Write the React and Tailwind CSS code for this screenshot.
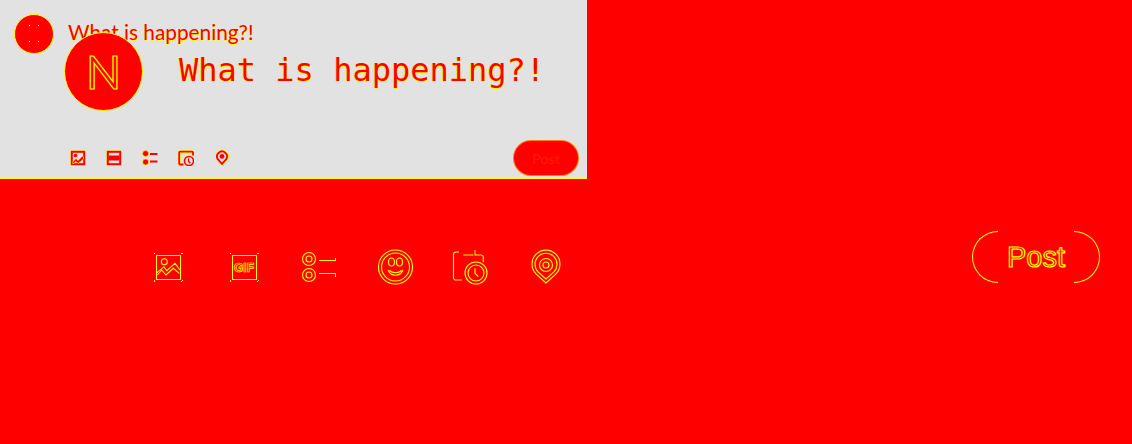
const halo = { stroke: '#ffff00', strokeWidth: 0.6 };

function SmallIcon({ children }) {
  return (
    <svg width="16" height="16" viewBox="0 0 16 16" fill="none" className="shrink-0">
      {children}
    </svg>
  );
}

function TinyImage() {
  return (
    <SmallIcon>
      <rect x="0.5" y="0.5" width="15" height="15" rx="1" fill="#ffff00" />
      <rect x="1.8" y="1.8" width="12.4" height="12.4" fill="#e2e2e2" stroke="#ff0000" strokeWidth="2" />
      <circle cx="5.5" cy="5.5" r="1.8" fill="#ff0000" />
      <path d="M2.5 12 6 8.500l2 2 4.500-4.500 1 1V9L8 13.500l-2-2-3 2.500z" fill="#ff0000" {...halo} />
    </SmallIcon>
  );
}

function TinyGif() {
  return (
    <SmallIcon>
      <rect x="0.5" y="0.5" width="15" height="15" rx="1" fill="#ffff00" />
      <rect x="1.8" y="1.8" width="12.4" height="12.4" fill="#e2e2e2" stroke="#ff0000" strokeWidth="2" />
      <rect x="2.500" y="5.500" width="11" height="5" fill="#ff0000" />
    </SmallIcon>
  );
}

function TinyPoll() {
  return (
    <SmallIcon>
      <circle cx="3.600" cy="3.600" r="3" fill="#ff0000" {...halo} />
      <circle cx="3.600" cy="12" r="3" fill="#ff0000" {...halo} />
      <path d="M8 4h7.500M8 11.500h7.500" stroke="#ff0000" strokeWidth="1.8" />
    </SmallIcon>
  );
}

function TinyCalendar() {
  return (
    <SmallIcon>
      <path d="M5.500 14.500H2.200a1 1 0 0 1-1-1V2.600a1 1 0 0 1 1-1H14a1 1 0 0 1 1 1v3" stroke="#ffff00" strokeWidth="2.800" />
      <path d="M5.500 14.500H2.200a1 1 0 0 1-1-1V2.600a1 1 0 0 1 1-1H14a1 1 0 0 1 1 1v3" stroke="#ff0000" strokeWidth="1.800" />
      <circle cx="11" cy="11" r="4.500" fill="#e2e2e2" stroke="#ffff00" strokeWidth="2.400" />
      <circle cx="11" cy="11" r="4.500" fill="#e2e2e2" stroke="#ff0000" strokeWidth="1.600" />
      <path d="M10.600 8.500v3l1.800 1.800" stroke="#ff0000" strokeWidth="1.400" />
    </SmallIcon>
  );
}

function TinyPin() {
  return (
    <SmallIcon>
      <path d="M8 15.500 2.700 9.800a6.300 6.300 0 1 1 10.600 0z" fill="#e2e2e2" stroke="#ffff00" strokeWidth="1" />
      <path d="M8 13.800 3.800 9.200a5 5 0 1 1 8.400 0z" fill="none" stroke="#ff0000" strokeWidth="1.800" />
      <circle cx="8" cy="6.400" r="2.400" fill="#ff0000" />
    </SmallIcon>
  );
}

function LineIcon({ children }) {
  return (
    <svg width="36" height="36" viewBox="0 0 36 36" fill="none" stroke="#ffff00" strokeWidth="1.100" className="shrink-0 overflow-visible">
      {children}
    </svg>
  );
}

function Ticks() {
  return (
    <path strokeWidth="1" shapeRendering="crispEdges" d="M4 4h1M4 4v1M31 4h1M32 4v1M4 32h1M4 31v1M31 32h1M32 31v1" />
  );
}

export default function App() {
  return (
    <div className="w-[1132px] h-[444px] overflow-hidden bg-[#ff0000] font-['Lato',sans-serif]">
      <div className="w-[587px] h-[179px] bg-[#e2e2e2] border-b border-[#ffff00]">
        <div className="flex items-center gap-[14px] pl-[14px] pt-[14px]">
          <div className="w-10 h-10 rounded-full bg-[#ff0000] border border-[#ffff00] shrink-0 flex items-center justify-center">
            <svg width="12" height="18" viewBox="0 0 12 18" fill="#ffff00">
              <rect x="1" y="0" width="1" height="1" />
              <rect x="10" y="0" width="1" height="1" />
              <rect x="1" y="16" width="1" height="1" />
              <rect x="10" y="16" width="1" height="1" />
            </svg>
          </div>
          <span className="-mt-1 text-[20.8px] leading-none text-[#ff0000] [text-shadow:0.5px_0.5px_0_#ffff00]">What is happening?!</span>
        </div>

        <div className="relative flex items-center -mt-[22px] pl-[64px]">
          <div className="w-[79px] h-[79px] rounded-full bg-[#ff0000] border border-[#ffff00] shrink-0 flex items-center justify-center text-[46px] leading-none text-[#ff0000] [-webkit-text-stroke:1.2px_#ffff00]">
            N
          </div>
          <span className="ml-[36px] -mt-[3px] font-['DejaVu_Sans_Mono',monospace] text-[32px] leading-none text-[#ff0000] [text-shadow:0.5px_0.5px_0_#ffff00,-0.5px_-0.5px_0_#ffff00]">
            What is happening?!
          </span>
        </div>

        <div className="flex items-center justify-between pl-[70px] pr-2 mt-[29px]">
          <div className="flex items-center gap-5">
            <TinyImage />
            <TinyGif />
            <TinyPoll />
            <TinyCalendar />
            <TinyPin />
          </div>
          <button className="w-[66px] h-9 rounded-full bg-[#ff0000] border border-[#ffff00]/50 text-[14px] font-bold text-[#ffff00]/10">
            Post
          </button>
        </div>
      </div>

      <div className="flex items-start justify-between pl-[150px] pr-8 pt-[52px]">
        <div className="flex items-center gap-10 mt-[18px]">
          <LineIcon>
            <Ticks />
            <rect strokeWidth="1" shapeRendering="crispEdges" x="6" y="6" width="24" height="24" />
            <circle cx="14.300" cy="12.700" r="3" />
            <path d="M6 24.300 14 17.700l2.700 4L25 14.300l5 6.700M7.300 26l4.400-5 4.300 5 7.300-6.700 6 5" />
          </LineIcon>
          <LineIcon>
            <Ticks />
            <rect strokeWidth="1" shapeRendering="crispEdges" x="6" y="6" width="24" height="24" />
            <text x="18" y="22.500" textAnchor="middle" fontFamily="Liberation Sans" fontWeight="700" fontSize="12" fill="none" strokeWidth="0.7">GIF</text>
          </LineIcon>
          <LineIcon>
            <circle cx="7" cy="10" r="6.500" />
            <circle cx="7" cy="10" r="3" />
            <circle cx="7" cy="26" r="6.500" />
            <circle cx="7" cy="26" r="3" />
            <path strokeWidth="1" shapeRendering="crispEdges" d="M17 11.700h16.700V8.500M17 24.300h16.700v3.400" />
          </LineIcon>
          <LineIcon>
            <circle cx="17.500" cy="18" r="17" />
            <circle cx="17.500" cy="18" r="14" />
            <ellipse cx="13.500" cy="13" rx="3" ry="4" />
            <ellipse cx="21.500" cy="13" rx="3" ry="4" />
            <path d="M10 21c3 7 12 7 15 0M11.500 21.500c3 3 9 3 12 0" />
          </LineIcon>
          <LineIcon>
            <path d="M7.700 31H2a2.500 2.500 0 0 1-2.500-2.500V5.500A2.500 2.500 0 0 1 2 3h3M9.300 6h10M21 1v5h6a2.300 2.300 0 0 1 2.300 2.300v5" />
            <circle cx="22" cy="24" r="11" />
            <circle cx="22" cy="24" r="8" />
            <path d="M21 19.300v5l3.300 3.400" />
          </LineIcon>
          <LineIcon>
            <path d="M16 34 6 24.900a14 14 0 1 1 20 0z" />
            <path d="M16 30 8 22.800a11 11 0 1 1 16 0z" />
            <circle cx="16" cy="16" r="6.500" />
            <circle cx="16" cy="16" r="3" />
          </LineIcon>
        </div>

        <div className="flex w-[128px] h-[52px] font-['Liberation_Sans',sans-serif]">
          <div className="w-[26px] rounded-l-full border border-r-0 border-[#ffff00]" />
          <div className="flex-1 flex items-center justify-center text-[29px] leading-none text-[#ff0000] [-webkit-text-stroke:1.2px_#ffff00]">
            Post
          </div>
          <div className="w-[26px] rounded-r-full border border-l-0 border-[#ffff00]" />
        </div>
      </div>
    </div>
  );
}
